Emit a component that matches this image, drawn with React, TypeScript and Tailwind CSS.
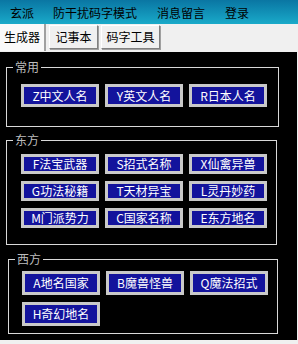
import React from 'react';

const font = { fontFamily: '"Noto Sans CJK SC", "Noto Sans", sans-serif' };

const menus = ['玄派', '防干扰码字模式', '消息留言', '登录'];

type Group = {
  title: string;
  rows: string[][];
  box: string;
  body: string;
  btn: string;
};

const groups: Group[] = [
  {
    title: '常用',
    rows: [['Z中文人名', 'Y英文人名', 'R日本人名']],
    box: 'mt-[8px] ml-[6px] w-[273px] h-[67px]',
    body: 'pt-[10px] pl-[8px]',
    btn: 'h-[23px]',
  },
  {
    title: '东方',
    rows: [
      ['F法宝武器', 'S招式名称', 'X仙禽异兽'],
      ['G功法秘籍', 'T天材异宝', 'L灵丹妙药'],
      ['M门派势力', 'C国家名称', 'E东方地名'],
    ],
    box: 'mt-[6px] ml-[6px] w-[271px] h-[112px]',
    body: 'pt-[7px] pl-[8px]',
    btn: 'h-[20px]',
  },
  {
    title: '西方',
    rows: [['A地名国家', 'B魔兽怪兽', 'Q魔法招式'], ['H奇幻地名']],
    box: 'mt-[7px] ml-[8px] w-[270px] h-[82px]',
    body: 'pt-[5px] pl-[7px]',
    btn: 'h-[24px]',
  },
];

const NameButton: React.FC<{ label: string; size: string }> = ({ label, size }) => (
  <button
    className={`${size} w-[78px] flex items-center justify-center border-[3px] border-[#c9c9c9] bg-[#13139c] text-[12px] leading-none text-white`}
    style={font}
  >
    {label}
  </button>
);

export default function App() {
  return (
    <div className="w-[298px] h-[344px] bg-[#f0f0f0] overflow-hidden" style={font}>
      <div className="h-[24px] flex items-center pt-[2px] bg-gradient-to-b from-[#0a76a3] to-[#1aaac9] text-[12px] text-black">
        <span className="ml-[10px]">{menus[0]}</span>
        <span className="ml-[19px]">{menus[1]}</span>
        <span className="ml-[20px]">{menus[2]}</span>
        <span className="ml-[20px]">{menus[3]}</span>
      </div>

      <div className="h-[28px] flex items-start text-[12px] text-black">
        <div className="h-[27px] w-[46px] flex items-center justify-center bg-[#f9f9f9] border-r-2 border-r-[#a0a0a0] pb-[1px]">
          生成器
        </div>
        <div className="mt-[1px] ml-[3px] h-[24px] w-[49px] flex items-center justify-center bg-[#f0f0f0] border border-t-white border-l-white border-r-[#808080] border-b-[#808080] shadow-[1px_1px_0_#a0a0a0]">
          记事本
        </div>
        <div className="mt-[1px] ml-[3px] h-[24px] w-[59px] flex items-center justify-center bg-[#f0f0f0] border border-t-white border-l-white border-r-[#808080] border-b-[#808080] shadow-[1px_1px_0_#a0a0a0]">
          码字工具
        </div>
      </div>

      <div className="w-[297px] h-[288px] bg-black flex flex-col">
        {groups.map((g) => (
          <fieldset
            key={g.title}
            className={`${g.box} shrink-0 border border-[#d8d8d8] pl-[6px]`}
          >
            <legend className="px-[2px] text-[12px] leading-[14px] text-[#bdbdbd]">{g.title}</legend>
            <div className={`${g.body} flex flex-col gap-y-[7px]`}>
              {g.rows.map((row, i) => (
                <div key={i} className="flex gap-x-[6px]">
                  {row.map((label) => (
                    <NameButton key={label} label={label} size={g.btn} />
                  ))}
                </div>
              ))}
            </div>
          </fieldset>
        ))}
      </div>
    </div>
  );
}
